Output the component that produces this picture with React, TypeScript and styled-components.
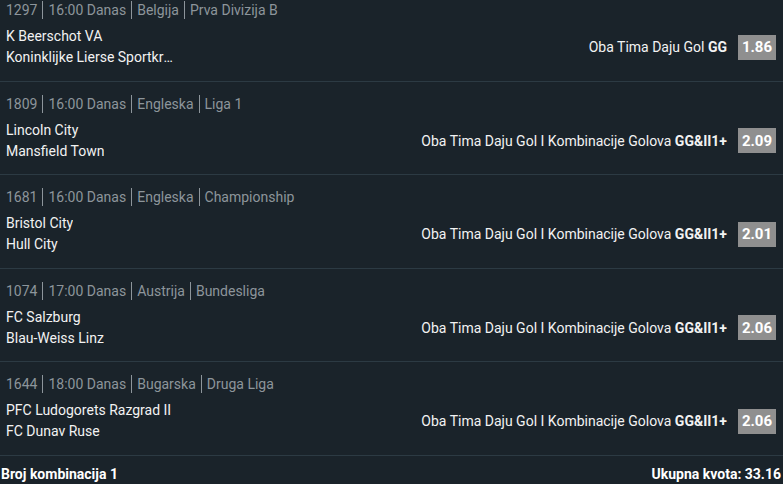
import styled, { createGlobalStyle } from "styled-components";

interface Match {
  code: string;
  time: string;
  country: string;
  league: string;
  home: string;
  away: string;
  market: string;
  pick: string;
  odds: string;
}

const matches: Match[] = [
  { code: "1297", time: "16:00 Danas", country: "Belgija", league: "Prva Divizija B", home: "K Beerschot VA", away: "Koninklijke Lierse Sportkring", market: "Oba Tima Daju Gol", pick: "GG", odds: "1.86" },
  { code: "1809", time: "16:00 Danas", country: "Engleska", league: "Liga 1", home: "Lincoln City", away: "Mansfield Town", market: "Oba Tima Daju Gol I Kombinacije Golova", pick: "GG&II1+", odds: "2.09" },
  { code: "1681", time: "16:00 Danas", country: "Engleska", league: "Championship", home: "Bristol City", away: "Hull City", market: "Oba Tima Daju Gol I Kombinacije Golova", pick: "GG&II1+", odds: "2.01" },
  { code: "1074", time: "17:00 Danas", country: "Austrija", league: "Bundesliga", home: "FC Salzburg", away: "Blau-Weiss Linz", market: "Oba Tima Daju Gol I Kombinacije Golova", pick: "GG&II1+", odds: "2.06" },
  { code: "1644", time: "18:00 Danas", country: "Bugarska", league: "Druga Liga", home: "PFC Ludogorets Razgrad II", away: "FC Dunav Ruse", market: "Oba Tima Daju Gol I Kombinacije Golova", pick: "GG&II1+", odds: "2.06" },
];

export default function App() {
  return <>
    <GlobalStyle />
    <Ticket>
      {matches.map(m => (
        <Row key={m.code}>
          <Meta>
            <MetaPart>{m.code}</MetaPart>
            <MetaPart divided>{m.time}</MetaPart>
            <MetaPart divided>{m.country}</MetaPart>
            <MetaPart divided>{m.league}</MetaPart>
          </Meta>
          <Body>
            <Teams>
              <Team>{m.home}</Team>
              <Team>{m.away}</Team>
            </Teams>
            <Bet>
              <Market>{m.market} <Pick>{m.pick}</Pick></Market>
              <Odds>{m.odds}</Odds>
            </Bet>
          </Body>
        </Row>
      ))}
      <Footer>
        <span>Broj kombinacija 1</span>
        <span>Ukupna kvota: 33.16</span>
      </Footer>
    </Ticket>
  </>
}

const GlobalStyle = createGlobalStyle`
  * { box-sizing: border-box; }
  body {
    margin: 0;
    background: #1a232a;
    font-family: Roboto, "Liberation Sans", sans-serif;
    font-size: 14px;
  }
`;

const Ticket = styled.div`
  display: flex;
  flex-direction: column;
  width: 783px;
  height: 484px;
  overflow: hidden;
  background: #1a232a;
`;

const Row = styled.div`
  display: flex;
  flex-direction: column;
  flex-shrink: 0;
  gap: 7px;
  padding: 13px 0 12.5px 6px;
  border-bottom: 1px solid #2c3a43;

  &:first-child {
    padding-top: 1px;
  }
`;

const Meta = styled.div`
  display: flex;
  align-items: center;
  height: 18px;
  color: #8d959b;
  font-size: 14px;
`;

const MetaPart = styled.span<{ divided?: boolean }>`
  line-height: 18px;
  ${p => p.divided && `
    margin-left: 5px;
    padding-left: 5px;
    border-left: 1px solid #8d959b;
  `}
`;

const Body = styled.div`
  display: flex;
  align-items: center;
  justify-content: space-between;
`;

const Teams = styled.div`
  display: flex;
  flex-direction: column;
`;

const Team = styled.div`
  max-width: 170px;
  line-height: 21px;
  color: #f2f2f2;
  white-space: nowrap;
  overflow: hidden;
  text-overflow: ellipsis;
`;

const Bet = styled.div`
  display: flex;
  align-items: center;
  gap: 11px;
  padding-right: 7px;
`;

const Market = styled.span`
  color: #f2f2f2;
`;

const Pick = styled.b`
  font-weight: 700;
`;

const Odds = styled.span`
  display: flex;
  align-items: center;
  justify-content: center;
  width: 38px;
  height: 25px;
  background: #8f8f8f;
  color: #fff;
  font-weight: 700;
  font-size: 15px;
`;

const Footer = styled.div`
  display: flex;
  justify-content: space-between;
  align-items: center;
  flex-shrink: 0;
  height: 36px;
  padding: 0 2px 0 1px;
  color: #fff;
  font-weight: 700;
`;
